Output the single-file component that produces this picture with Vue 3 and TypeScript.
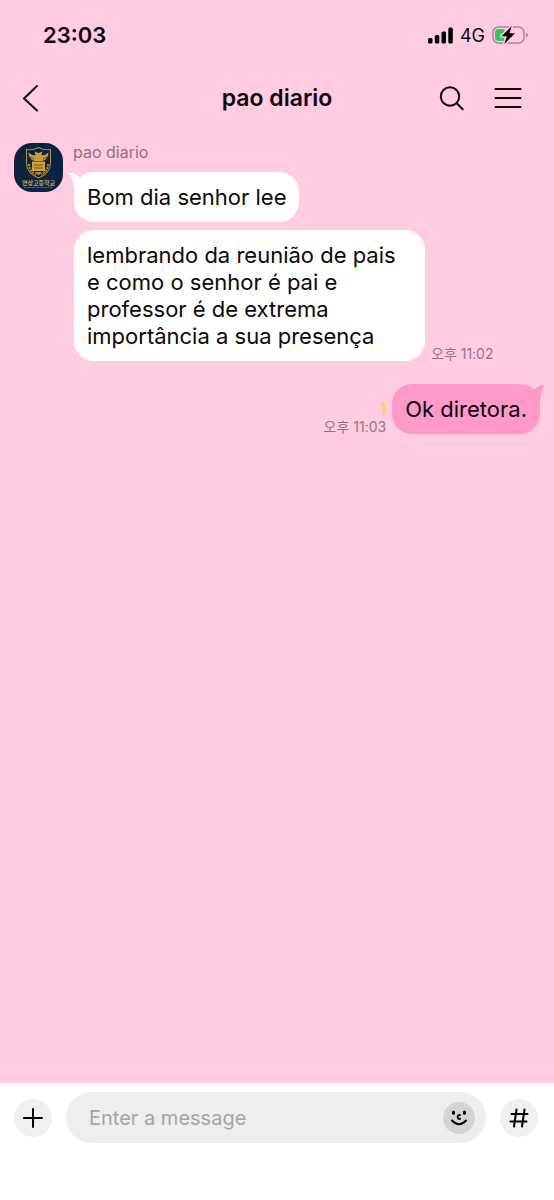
<script setup lang="ts">
import { ref } from 'vue'

interface Message {
  id: number
  text: string
  time?: string
  tail: boolean
}

const contact = 'pao diario'
const received: Message[] = [
  { id: 1, text: 'Bom dia senhor lee', tail: true },
  {
    id: 2,
    text: 'lembrando da reunião de pais e como o senhor é pai e professor é de extrema importância a sua presença',
    time: '오후 11:02',
    tail: false,
  },
]
const sent = { text: 'Ok diretora.', time: '오후 11:03', unread: 1 }
const draft = ref('')
</script>

<template>
  <div class="phone">
    <div class="status">
      <span class="clock">23:03</span>
      <div class="indicators">
        <svg class="signal" width="25" height="17" viewBox="0 0 25 17" aria-hidden="true">
          <rect x="0" y="11" width="4.500" height="5.500" rx="1.500" />
          <rect x="6.800" y="8" width="4.500" height="8.500" rx="1.500" />
          <rect x="13.500" y="4.500" width="4.500" height="12" rx="1.500" />
          <rect x="20.300" y="0.500" width="4.500" height="16" rx="1.500" />
        </svg>
        <span class="network">4G</span>
        <svg class="battery" width="36" height="20" viewBox="0 0 36 20" aria-hidden="true">
          <rect x="1" y="2" width="31" height="16" rx="5.500" fill="none" stroke="#a9839a" stroke-width="1.400" />
          <path d="M34 7.500q1.800 1 1.800 2.500t-1.800 2.500z" fill="#a9839a" />
          <path d="M6.500 4h6v12h-6Q3 16 3 12.500V7.500Q3 4 6.500 4z" fill="#34c759" />
          <path d="M19.800 1L9.500 11.200h5.400l-2.600 7.800L23 8.300h-5.600z" fill="#000" stroke="#ffcce2" stroke-width="3" stroke-linejoin="round" paint-order="stroke" />
        </svg>
      </div>
    </div>

    <header class="bar">
      <div class="side">
        <button class="icon" type="button" aria-label="Back">
          <svg width="18" height="28" viewBox="0 0 18 28"><path d="M15 2L2 14.500l13 12" /></svg>
        </button>
      </div>
      <h1>{{ contact }}</h1>
      <div class="side end">
        <button class="icon" type="button" aria-label="Search">
          <svg width="26" height="26" viewBox="0 0 26 26"><circle cx="11" cy="11.500" r="9.200" /><path d="M17.700 18.200l6 6" /></svg>
        </button>
        <button class="icon" type="button" aria-label="Menu">
          <svg width="28" height="26" viewBox="0 0 28 26"><path d="M1.500 4h25M1.500 13h25M1.500 22h25" /></svg>
        </button>
      </div>
    </header>

    <main class="chat">
      <section class="incoming">
        <svg class="avatar" width="49" height="49" viewBox="0 0 49 49" role="img" aria-label="연상고등학교">
          <rect width="49" height="49" rx="18" fill="#0b2340" />
          <g fill="none" stroke="#b28d38" stroke-width="1.100" stroke-linejoin="round">
            <path d="M12.500 6.500q6.500 1 12-2 5.500 3 12 2v13.500q0 10-12 15-12-5-12-15z" />
            <path d="M15 21q0 7 7 10.500M34 21q0 7-7 10.500" stroke-dasharray="2 1" stroke-width="2" />
          </g>
          <path d="M14.500 9.500q4 3.500 7 2.500l-1-3.500 4 1.500 4-1.500-1 3.500q3 1 7-2.500-.5 7-6 8.500h-8q-5.500-1.500-6-8.500z" fill="#c49b3d" />
          <path d="M18 18.500h13v9.500h-13z" fill="#d1a13a" />
          <path d="M20 22h9M20 25h9M16 14l4 2M33 14l-4 2" stroke="#624e2c" />
          <path d="M21 29l3.500 3.500 3.500-3.500" fill="#b28d38" />
          <text x="24.500" y="41.500" text-anchor="middle">연상고등학교</text>
          <path d="M10 44.500h29" stroke="#756434" stroke-width="1.200" stroke-dasharray="2 .6" />
        </svg>
        <div class="thread">
          <span class="sender">{{ contact }}</span>
          <div v-for="m in received" :key="m.id" class="row">
            <p class="bubble">
              <svg v-if="m.tail" class="tail" width="16" height="20" viewBox="0 0 16 20" aria-hidden="true">
                <path d="M0 1Q7 1 10.500 5.500L16 12V20H5Q5 7 0 1z" />
              </svg>
              {{ m.text }}
            </p>
            <time v-if="m.time">{{ m.time }}</time>
          </div>
        </div>
      </section>

      <section class="row outgoing">
        <div class="meta">
          <span class="unread">{{ sent.unread }}</span>
          <time>{{ sent.time }}</time>
        </div>
        <p class="bubble">
          <svg class="tail" width="16" height="20" viewBox="0 0 16 20" aria-hidden="true">
            <path d="M16 1Q9 1 5.500 5.500L0 12V20H11Q11 7 16 1z" />
          </svg>
          {{ sent.text }}
        </p>
      </section>
    </main>

    <form class="composer" @submit.prevent>
      <button class="round" type="button" aria-label="Add attachment">
        <svg width="20" height="20" viewBox="0 0 20 20"><path d="M10 1v18M1 10h18" /></svg>
      </button>
      <div class="field">
        <input v-model="draft" type="text" placeholder="Enter a message" aria-label="Enter a message" />
        <button class="emoji" type="button" aria-label="Emoji">
          <svg width="20" height="20" viewBox="0 0 20 20">
            <path d="M4.500 4v1.200M15.500 4v1.200" stroke-width="3" />
            <path d="M11 7q-2.400 0-2.400 2t2.400 1.800M3 12.500q7 7.500 14 0" />
          </svg>
        </button>
      </div>
      <button class="round" type="button" aria-label="Hashtag search">
        <svg width="20" height="20" viewBox="0 0 20 20"><path d="M7.500 1.500L5 18.500M15.500 1.500L13 18.500M2.500 6h16M1.500 13.500h16" /></svg>
      </button>
    </form>
  </div>
</template>

<style>
body {
  margin: 0;
}
</style>

<style scoped>
.phone {
  display: flex;
  flex-direction: column;
  min-height: 100vh;
  background: #ffcce2;
  color: #0d080b;
  font-family: Inter, "Noto Sans CJK KR", sans-serif;
}

button {
  display: grid;
  place-items: center;
  padding: 0;
  border: 0;
  background: none;
  color: inherit;
  cursor: pointer;
}

button svg {
  fill: none;
  stroke: currentColor;
  stroke-width: 2;
  stroke-linecap: round;
  stroke-linejoin: round;
}

.status {
  display: flex;
  align-items: center;
  justify-content: space-between;
  height: 70px;
  padding: 0 26px 0 43px;
}

.clock {
  font-size: 22px;
  font-weight: 600;
}

.indicators {
  display: flex;
  align-items: center;
  gap: 7px;
}

.network {
  font-size: 18px;
}

.bar {
  display: grid;
  grid-template-columns: 1fr auto 1fr;
  align-items: center;
  height: 56px;
  padding: 0 22px;
}

.side {
  display: flex;
}

.end {
  justify-content: flex-end;
  gap: 29px;
  padding-right: 10px;
}

h1 {
  margin: 0;
  font-size: 23px;
  font-weight: 600;
}

.chat {
  flex: 1;
  padding: 17px 14px;
}

.incoming {
  display: flex;
  align-items: flex-start;
  gap: 11px;
}

.avatar {
  flex: none;
}

.avatar text {
  fill: #c7a354;
  font-family: "Noto Sans CJK KR", sans-serif;
  font-size: 6px;
  font-weight: 700;
}

.thread {
  flex: 1;
  min-width: 0;
}

.sender {
  display: block;
  margin: -1px 0 10px -1px;
  color: #917080;
  font-size: 16px;
  line-height: 20px;
}

.row {
  display: flex;
  align-items: flex-end;
  gap: 6px;
}

.row + .row {
  margin-top: 8px;
}

.bubble {
  position: relative;
  max-width: 325px;
  margin: 0;
  padding: 12px 13px 11px;
  border-radius: 20px;
  background: #fff;
  font-size: 22px;
  line-height: 27px;
}

.tail {
  position: absolute;
  top: 0;
  left: -5px;
  fill: #fff;
}

time {
  color: #97738a;
  font-size: 14px;
  line-height: 14px;
  white-space: nowrap;
}

.outgoing {
  justify-content: flex-end;
  margin-top: 23px;
}

.outgoing .bubble {
  background: #ff99c8;
}

.outgoing .tail {
  right: -5px;
  left: auto;
  fill: #ff99c8;
}

.meta {
  display: flex;
  flex-direction: column;
  align-items: flex-end;
}

.unread {
  color: #f5d93c;
  font-size: 14px;
  font-weight: 700;
  line-height: 22px;
}

.composer {
  display: flex;
  align-items: center;
  gap: 14px;
  padding: 9px 16px 57px 14px;
  background: #fff;
}

.round {
  flex: none;
  width: 38px;
  height: 38px;
  border-radius: 50%;
  background: #f0f0f0;
  color: #000;
}

.field {
  display: flex;
  flex: 1;
  align-items: center;
  min-width: 0;
  height: 51px;
  padding: 0 11px 0 23px;
  border-radius: 26px;
  background: #eee;
}

input {
  flex: 1;
  min-width: 0;
  padding: 0;
  border: 0;
  outline: 0;
  background: none;
  color: #000;
  font: inherit;
  font-size: 20px;
}

input::placeholder {
  color: #a5a5a5;
  opacity: 1;
}

.emoji {
  flex: none;
  width: 32px;
  height: 32px;
  border-radius: 50%;
  background: #d4d4d4;
  color: #000;
}
</style>
